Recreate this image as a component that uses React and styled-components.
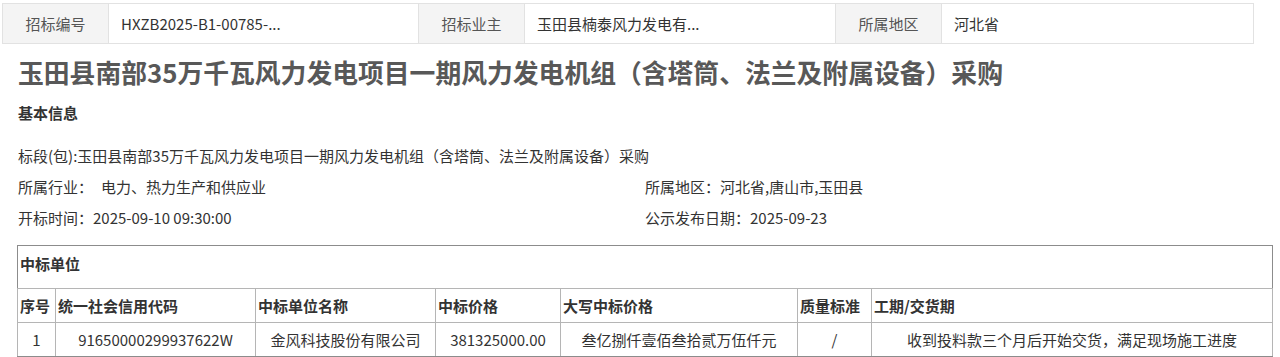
import React from "react";
import styled, { createGlobalStyle } from "styled-components";

const GlobalStyle = createGlobalStyle`
  body {
    margin: 0;
    background: #fff;
    font-family: "Noto Sans CJK SC", "Noto Sans", sans-serif;
    color: #333;
  }
`;

const Page = styled.div`
  width: 1280px;
  height: 357px;
  overflow: hidden;
  padding-top: 3px;
  box-sizing: border-box;
`;

const InfoBar = styled.div`
  margin-left: 2px;
  width: 1252px;
  height: 41px;
  display: grid;
  grid-template-columns: 106px 310px 106px 311px 106px 313px;
  border-top: 1px solid #e2e2e2;
  border-bottom: 1px solid #e2e2e2;
  box-sizing: border-box;
`;

const BarCell = styled.div`
  display: flex;
  align-items: center;
  justify-content: ${(p) => (p.$label ? "center" : "flex-start")};
  padding: 0 ${(p) => (p.$label ? "0" : "12px")};
  background: ${(p) => (p.$label ? "#f4f4f4" : "#fff")};
  border-left: 1px solid #e2e2e2;
  border-right: ${(p) => (p.$last ? "1px solid #e2e2e2" : "none")};
  font-size: 15px;
  color: ${(p) => (p.$label ? "#555" : "#333")};
  white-space: nowrap;
`;

const Title = styled.h1`
  margin: 10px 0 0 18px;
  font-size: 25.8px;
  line-height: 36px;
  font-weight: 700;
  color: #585858;
  white-space: nowrap;
`;

const SectionHead = styled.div`
  margin: 12px 0 0 18px;
  font-size: 15px;
  line-height: 22px;
  font-weight: 700;
  color: #333;
`;

const Details = styled.div`
  margin: 16px 0 0 18px;
  display: grid;
  grid-template-columns: 627px 1fr;
  grid-auto-rows: 31px;
  align-items: center;
  font-size: 15px;
  color: #333;
`;

const Line = styled.div`
  grid-column: ${(p) => (p.$wide ? "1 / 3" : "auto")};
  white-space: nowrap;
`;

const Spacer = styled.span`
  display: inline-block;
  width: ${(p) => p.$w}px;
`;

const Table = styled.table`
  margin: 12px 0 0 17px;
  width: 1255px;
  border-collapse: collapse;
  table-layout: fixed;
  font-size: 15px;
  color: #333;
  border: 1px solid #8c8c8c;
`;

const CaptionCell = styled.th`
  height: 43px;
  box-sizing: border-box;
  text-align: left;
  padding: 0 2px 8px;
  font-weight: 700;
  border: 1px solid #8c8c8c;
  border-bottom-color: #b5b5b5;
`;

const HeadCell = styled.th`
  height: 33px;
  padding: 0 2px;
  text-align: left;
  font-weight: 700;
  white-space: nowrap;
  border: 1px solid #b5b5b5;
`;

const DataCell = styled.td`
  height: 33px;
  padding: 0 2px;
  text-align: center;
  white-space: nowrap;
  border: 1px solid #b5b5b5;
  border-bottom-color: #8c8c8c;
`;

const columns = [
  { title: "序号", width: 38 },
  { title: "统一社会信用代码", width: 200 },
  { title: "中标单位名称", width: 180 },
  { title: "中标价格", width: 125 },
  { title: "大写中标价格", width: 237 },
  { title: "质量标准", width: 74 },
  { title: "工期/交货期", width: 401 },
];

const row = [
  "1",
  "91650000299937622W",
  "金风科技股份有限公司",
  "381325000.00",
  "叁亿捌仟壹佰叁拾贰万伍仟元",
  "/",
  "收到投料款三个月后开始交货，满足现场施工进度",
];

const bar = [
  ["招标编号", "HXZB2025-B1-00785-..."],
  ["招标业主", "玉田县楠泰风力发电有..."],
  ["所属地区", "河北省"],
];

const App = () => (
  <Page>
    <GlobalStyle />
    <InfoBar>
      {bar.map(([label, value], i) => (
        <React.Fragment key={label}>
          <BarCell $label>{label}</BarCell>
          <BarCell $last={i === bar.length - 1}>{value}</BarCell>
        </React.Fragment>
      ))}
    </InfoBar>
    <Title>玉田县南部35万千瓦风力发电项目一期风力发电机组（含塔筒、法兰及附属设备）采购</Title>
    <SectionHead>基本信息</SectionHead>
    <Details>
      <Line $wide>
        标段(包):玉田县南部35万千瓦风力发电项目一期风力发电机组（含塔筒、法兰及附属设备）采购
      </Line>
      <Line>
        所属行业：<Spacer $w={8} />电力、热力生产和供应业
      </Line>
      <Line>所属地区：河北省,唐山市,玉田县</Line>
      <Line>开标时间：2025-09-10 09:30:00</Line>
      <Line>公示发布日期：2025-09-23</Line>
    </Details>
    <Table>
      <colgroup>
        {columns.map((c) => (
          <col key={c.title} style={{ width: c.width }} />
        ))}
      </colgroup>
      <tbody>
        <tr>
          <CaptionCell colSpan={columns.length}>中标单位</CaptionCell>
        </tr>
        <tr>
          {columns.map((c) => (
            <HeadCell key={c.title}>{c.title}</HeadCell>
          ))}
        </tr>
        <tr>
          {row.map((v, i) => (
            <DataCell key={i}>{v}</DataCell>
          ))}
        </tr>
      </tbody>
    </Table>
  </Page>
);

export default App;
